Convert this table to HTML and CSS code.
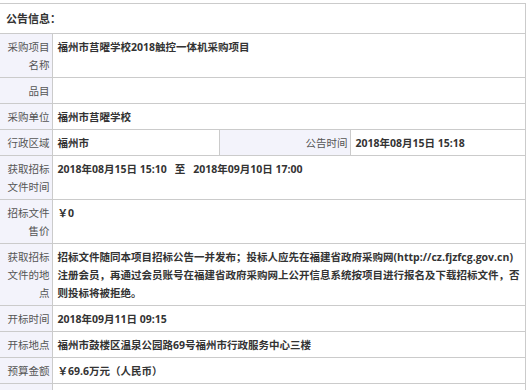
FILE: index.html
```html
<!DOCTYPE html>
<html lang="zh-CN">
<head>
<meta charset="utf-8">
<title>公告信息</title>
<link rel="stylesheet" href="styles.css">
</head>
<body>
<div class="wrap">
<table class="info">
  <colgroup>
    <col class="c1"><col class="c2"><col class="c3"><col class="c4">
  </colgroup>
  <tr class="head"><td colspan="4">公告信息：</td></tr>
  <tr><th>采购项目名称</th><td colspan="3">福州市莒曜学校2018触控一体机采购项目</td></tr>
  <tr><th>品目</th><td colspan="3"></td></tr>
  <tr><th>采购单位</th><td colspan="3">福州市莒曜学校</td></tr>
  <tr><th>行政区域</th><td>福州市</td><th>公告时间</th><td>2018年08月15日 15:18</td></tr>
  <tr class="tall"><th>获取招标文件时间</th><td colspan="3">2018年08月15日 15:10<span class="to">至</span>2018年09月10日 17:00</td></tr>
  <tr class="tall"><th>招标文件售价</th><td colspan="3">￥0</td></tr>
  <tr><th>获取招标文件的地点</th><td colspan="3" class="nw">招标文件随同本项目招标公告一并发布；投标人应先在福建省政府采购网(http://cz.fjzfcg.gov.cn)<br>注册会员，再通过会员账号在福建省政府采购网上公开信息系统按项目进行报名及下载招标文件，否<br>则投标将被拒绝。</td></tr>
  <tr><th>开标时间</th><td colspan="3">2018年09月11日 09:15</td></tr>
  <tr><th>开标地点</th><td colspan="3">福州市鼓楼区温泉公园路69号福州市行政服务中心三楼</td></tr>
  <tr><th>预算金额</th><td colspan="3">￥69.6万元（人民币）</td></tr>
  <tr><th>&nbsp;</th><td colspan="3"></td></tr>
</table>
</div>
</body>
</html>
```
FILE: styles.css
```css
html, body {
  margin: 0;
  padding: 0;
  background: #fff;
}
.wrap {
  padding-top: 3px;
}
.info {
  width: 525px;
  border-collapse: collapse;
  table-layout: fixed;
  font-family: "Open Sans", "Noto Sans CJK SC", sans-serif;
  font-size: 10.5px;
  line-height: 18px;
}
.c1 { width: 52px; }
.c2 { width: 167px; }
.c3 { width: 131px; }
.c4 { width: 175px; }
.info th, .info td {
  border: 1px solid #cbcbcb;
  vertical-align: top;
  padding: 4px 4px 3px 5px;
}
.info th {
  background: #f3f3fb;
  color: #555;
  font-weight: normal;
  text-align: right;
  padding: 4px 2px 3px 2px;
}
.info tr > :first-child {
  border-left: 0;
}
.info td {
  color: #333;
  font-weight: bold;
}
.to {
  margin: 0 8px;
}
.head td {
  height: 22px;
  padding: 4px 6px 3px 6px;
  font-size: 11px;
  line-height: 22px;
  color: #333;
}
.tall td, .tall th {
  height: 36px;
}
.nw {
  white-space: nowrap;
}
```
